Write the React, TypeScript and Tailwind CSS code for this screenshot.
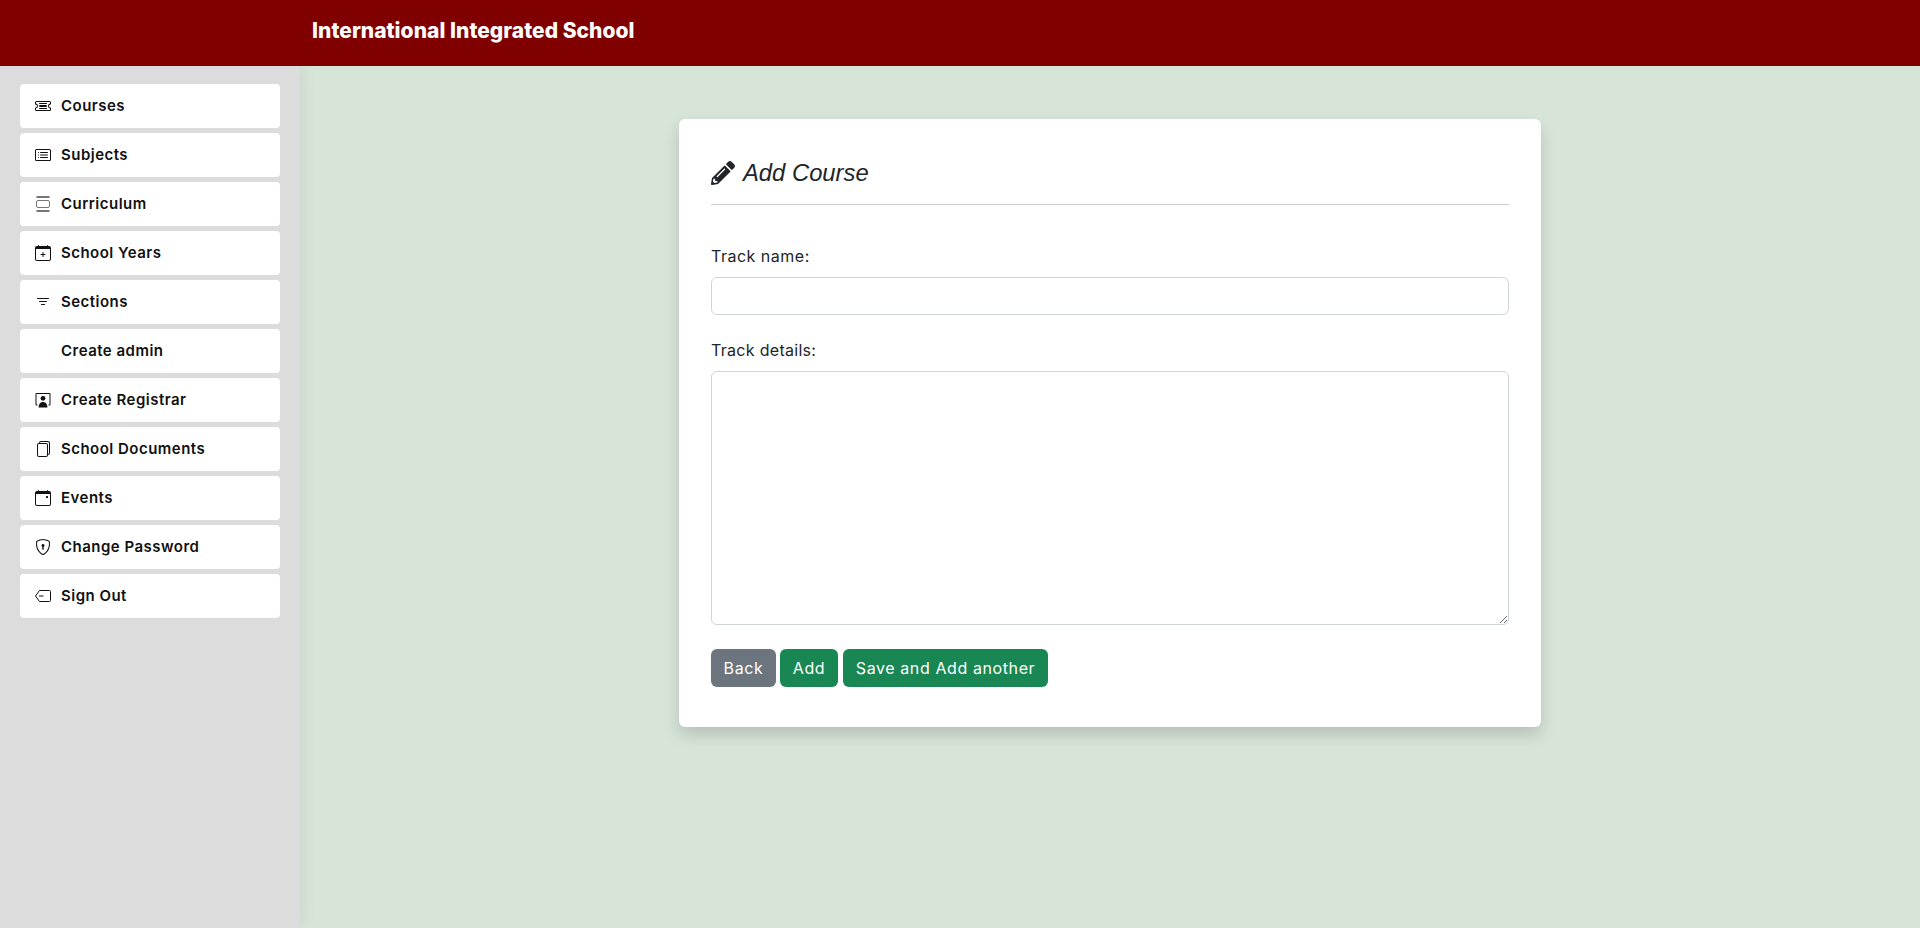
import React from "react";
import { BsTicketDetailed, BsCardList, BsCalendarPlus, BsFilter, BsFiles, BsCalendarEvent, BsShieldLock } from "react-icons/bs";
import { FaPencilAlt } from "react-icons/fa";

const Stack = () => (
  <svg width="16" height="16" viewBox="0 0 16 16" fill="none" stroke="#777" strokeWidth="1">
    <path d="M1.5 1h13M1.5 15h13" strokeWidth="2" />
    <rect x="1.5" y="4.5" width="13" height="7" rx="1.5" />
  </svg>
);
const SignOut = () => (
  <svg width="16" height="16" viewBox="0 0 16 16" fill="none" stroke="#111" strokeWidth="1">
    <path d="M4.5 2.5h10a1 1 0 0 1 1 1v9a1 1 0 0 1-1 1h-10l-4-5.5z" />
    <path d="M4 8h4.5" />
  </svg>
);
const Registrar = () => (
  <svg width="16" height="16" viewBox="0 0 16 16">
    <path d="M1.5 1h13a1 1 0 0 1 1 1v10.5a1 1 0 0 1-1 1h-1v-1h1V2h-13v10.5h1v1h-1a1 1 0 0 1-1-1V2a1 1 0 0 1 1-1z" fill="#111" />
    <circle cx="8" cy="6.3" r="2.4" fill="#111" />
    <path d="M3.6 15.5c0-3.2 1.8-5.4 4.4-5.4s4.4 2.2 4.4 5.4z" fill="#111" />
  </svg>
);

const items: [string, React.ReactNode][] = [
  ["Courses", <BsTicketDetailed size={16} />],
  ["Subjects", <BsCardList size={16} />],
  ["Curriculum", <Stack />],
  ["School Years", <BsCalendarPlus size={16} />],
  ["Sections", <BsFilter size={16} />],
  ["Create admin", null],
  ["Create Registrar", <Registrar />],
  ["School Documents", <BsFiles size={16} />],
  ["Events", <BsCalendarEvent size={16} />],
  ["Change Password", <BsShieldLock size={16} />],
  ["Sign Out", <SignOut />],
];

export default function App() {
  return (
    <div className="h-[928px] overflow-hidden flex flex-col bg-[#d7e4d8] font-['Inter','Liberation_Sans',sans-serif] text-[#212529]">
      <header className="relative z-20 h-[66px] shrink-0 bg-[#800000] flex items-center pl-[312px] pb-[4px]">
        <h1 className="text-[21px] font-extrabold text-white tracking-[0.03px]">International Integrated School</h1>
      </header>
      <div className="flex flex-1 min-h-0">
        <aside className="relative z-10 w-[300px] shrink-0 bg-[#dcdcdc] shadow-[0_0_16px_rgba(0,0,0,0.08)] pt-[18px] px-5 flex flex-col gap-[5px]">
          {items.map(([label, icon]) => (
            <a key={label} className="h-[44px] bg-white rounded-[4px] flex items-center pl-[15px] text-[15px] tracking-[0.48px] font-semibold text-[#111]">
              <span className="w-[16px] h-[16px] flex items-center justify-center text-[#111] mr-[10px]">{icon}</span>
              <span>{label}</span>
            </a>
          ))}
        </aside>
        <main className="flex-1 flex justify-center items-start pt-[53px]">
          <section className="w-[862px] h-[608px] bg-white rounded-[6px] shadow-[0_8px_16px_rgba(0,0,0,0.15)] px-8 pt-[35px]">
            <div className="flex items-center gap-[8px] h-[38px] text-[23.8px] italic font-['Liberation_Sans',sans-serif]">
              <FaPencilAlt size={24} />
              <span>Add Course</span>
            </div>
            <hr className="mt-[12px] border-t border-[#cbcdcf]" />
            <form className="mt-[39px] flex flex-col">
              <label className="text-[16px] leading-[24px] tracking-[0.5px] mb-[9px]">Track name:</label>
              <input className="h-[38px] border border-[#ced4da] rounded-[6px] bg-white" />
              <label className="text-[16px] leading-[24px] tracking-[0.3px] mt-[23px] mb-[9px]">Track details:</label>
              <textarea className="h-[254px] border border-[#ced4da] rounded-[6px] bg-white resize-y" />
              <div className="flex gap-1 mt-[24px] text-[16px] text-white tracking-[0.6px]">
                <button type="button" className="h-[38px] w-[65px] rounded-[6px] bg-[#6c757d]">Back</button>
                <button type="button" className="h-[38px] w-[58px] mr-px rounded-[6px] bg-[#198754]">Add</button>
                <button type="button" className="h-[38px] w-[205px] rounded-[6px] bg-[#198754]">Save and Add another</button>
              </div>
            </form>
          </section>
        </main>
      </div>
    </div>
  );
}
